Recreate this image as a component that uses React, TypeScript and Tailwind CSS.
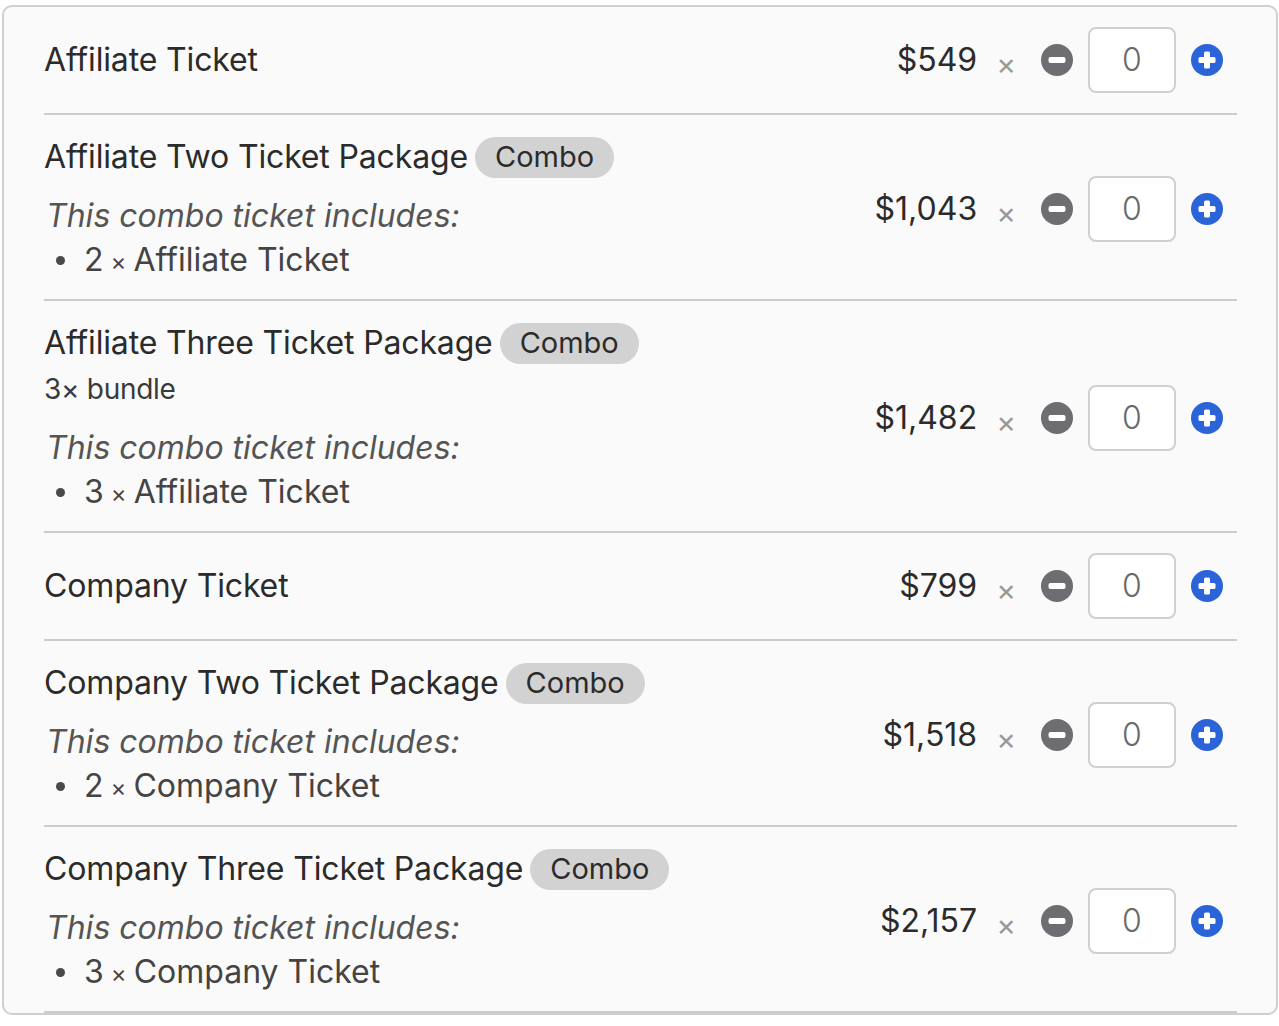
import React from "react";

type Ticket = {
  name: string;
  price: string;
  combo?: boolean;
  note?: string;
  includes?: { qty: number; name: string };
};

const tickets: Ticket[] = [
  { name: "Affiliate Ticket", price: "$549" },
  {
    name: "Affiliate Two Ticket Package",
    price: "$1,043",
    combo: true,
    includes: { qty: 2, name: "Affiliate Ticket" },
  },
  {
    name: "Affiliate Three Ticket Package",
    price: "$1,482",
    combo: true,
    note: "3× bundle",
    includes: { qty: 3, name: "Affiliate Ticket" },
  },
  { name: "Company Ticket", price: "$799" },
  {
    name: "Company Two Ticket Package",
    price: "$1,518",
    combo: true,
    includes: { qty: 2, name: "Company Ticket" },
  },
  {
    name: "Company Three Ticket Package",
    price: "$2,157",
    combo: true,
    includes: { qty: 3, name: "Company Ticket" },
  },
];

function MinusIcon() {
  return (
    <svg width="32" height="32" viewBox="0 0 32 32">
      <circle cx="16" cy="16" r="16" fill="#6e6d72" />
      <rect x="7.5" y="13" width="17" height="6" rx="2" fill="#fff" />
    </svg>
  );
}

function PlusIcon() {
  return (
    <svg width="32" height="32" viewBox="0 0 32 32">
      <circle cx="16" cy="16" r="16" fill="#2b63d9" />
      <rect x="7.5" y="13" width="17" height="6" rx="1.5" fill="#fff" />
      <rect x="13" y="7.5" width="6" height="17" rx="1.5" fill="#fff" />
    </svg>
  );
}

function TicketRow({ t }: { t: Ticket }) {
  return (
    <div className={`flex items-center justify-between border-b-2 border-[#cccccc] pt-5 ${t.combo ? "pb-[17px]" : "pb-5"}`}>
      <div className="flex flex-col">
        <div className="flex items-center h-[44px] gap-[7px]">
          <span className="text-[32px] text-[#2b2b2b] tracking-[-0.15px]">{t.name}</span>
          {t.combo && (
            <span className="h-[41px] px-[20px] rounded-full bg-[#d2d2d2] text-[29px] text-[#2b2b2b] flex items-center">
              Combo
            </span>
          )}
        </div>
        {t.note && (
          <div className="mt-[6px] h-[36px] flex items-center text-[28px] text-[#3a3a3a] tracking-[-0.3px]">
            {t.note}
          </div>
        )}
        {t.includes && (
          <>
            <div className={`${t.note ? "mt-[19px]" : "mt-[15px]"} h-[44px] flex items-center italic text-[32px] text-[#555] pl-[2px]`}>
              This combo ticket includes:
            </div>
            <div className="h-[44px] flex items-center text-[32px] text-[#444]">
              <span className="w-[9px] h-[9px] rounded-full bg-[#4a4a4a] ml-[12px] mr-[19px]" />
              <span>{t.includes.qty}</span>
              <span className="text-[24px] mx-[7px] mt-[4px]">×</span>
              <span>{t.includes.name}</span>
            </div>
          </>
        )}
      </div>
      <div className="flex items-center pr-[14px]">
        <span className="text-[32px] text-[#2b2b2b]">{t.price}</span>
        <span className="ml-[19px] mt-[8px] text-[30px] leading-none text-[#999]">×</span>
        <button className="ml-[25px]">
          <MinusIcon />
        </button>
        <div className="ml-[15px] w-[88px] h-[66px] bg-white border-2 border-[#d0d0d0] rounded-[8px] flex items-center justify-center text-[32px] font-light text-[#6a6a6a]">
          0
        </div>
        <button className="ml-[15px]">
          <PlusIcon />
        </button>
      </div>
    </div>
  );
}

export default function App() {
  return (
    <div className="min-h-screen bg-white pt-[5px] pl-[2px]" style={{ fontFamily: "Inter, 'Noto Sans', sans-serif" }}>
      <div className="w-[1276px] border-2 border-[#cfcfcf] rounded-[10px] bg-[#fafafa] pl-10 pr-[39px]">
        {tickets.map((t) => (
          <TicketRow key={t.name} t={t} />
        ))}
      </div>
    </div>
  );
}
